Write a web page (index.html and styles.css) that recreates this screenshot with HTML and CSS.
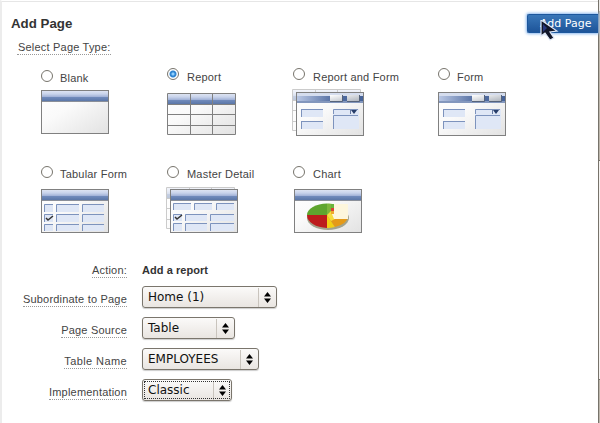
FILE: index.html
```html
<!DOCTYPE html>
<html lang="en">
<head>
<meta charset="utf-8">
<title>Add Page</title>
<link rel="stylesheet" href="styles.css">
</head>
<body>
<svg class="defs" width="0" height="0" aria-hidden="true">
  <defs>
    <linearGradient id="bar" x1="0" y1="0" x2="0" y2="1"><stop offset="0" stop-color="#dde3f2"/><stop offset=".3" stop-color="#c8d3eb"/><stop offset=".55" stop-color="#a5b5d9"/><stop offset=".65" stop-color="#6f89ba"/><stop offset="1" stop-color="#5b77a8"/></linearGradient>
    <linearGradient id="paper" x1="0" y1="0" x2="1" y2="1"><stop offset="0" stop-color="#fff"/><stop offset=".4" stop-color="#fafafa"/><stop offset="1" stop-color="#e2e2e2"/></linearGradient>
    <linearGradient id="formbar" x1="0" y1="0" x2="1" y2="0"><stop offset="0" stop-color="#b9c7e4"/><stop offset=".55" stop-color="#526da1"/><stop offset="1" stop-color="#466398"/></linearGradient>
    <linearGradient id="btn" x1="0" y1="0" x2="1" y2="1"><stop offset="0" stop-color="#fff"/><stop offset="1" stop-color="#aeb4bd"/></linearGradient>
    <symbol id="window" viewBox="0 0 68 44" width="68" height="44">
      <rect x=".5" y=".5" width="67" height="43" fill="url(#paper)" stroke="#808080"/>
      <rect x="1" y="1" width="66" height="10" fill="url(#bar)"/>
      <path d="M1 11.5h66" stroke="#8a8f99"/>
    </symbol>
    <symbol id="table" viewBox="0 0 70 42" width="70" height="42">
      <rect x=".5" y=".5" width="68" height="41" fill="url(#paper)"/>
      <rect x="1" y="1" width="67" height="10" fill="url(#bar)"/>
      <path d="M.5.5h68v41H.5zM.5 11.5h68M.5 21.5h68M.5 32.5h68M23.500 .5v41M45.500 .5v41" fill="none" stroke="#808080"/>
    </symbol>
    <symbol id="field" viewBox="0 0 22 8" width="22" height="8" preserveAspectRatio="none">
      <rect width="22" height="8" fill="#dfe7f6"/><path d="M0 .5h22M.5 0v8" stroke="#7d93bd" fill="none"/>
    </symbol>
    <symbol id="form" viewBox="0 0 68 44" width="68" height="44">
      <rect x=".5" y=".5" width="67" height="43" fill="url(#paper)" stroke="#808080"/>
      <rect x="1" y="1" width="66" height="3" fill="#d5ddee"/>
      <rect x="1" y="4" width="66" height="5" fill="url(#formbar)"/>
      <rect x="1" y="9" width="66" height="2" fill="#8397bd"/>
      <path d="M34 3h12v6H34zM51 3h12v6H51z" fill="url(#btn)"/>
      <path d="M34 9.500h12.500V3M51 9.500h12.500V3" stroke="#56637a" fill="none"/>
      <use href="#field" x="5" y="17"/><use href="#field" x="5" y="29"/>
      <path d="M37 17h26v20H37z" fill="#dfe7f6"/>
      <path d="M37.500 22v-4.500H62M37.500 37V23.500H62" fill="none" stroke="#7d93bd"/>
      <path d="M54.500 18v4" stroke="#6478a0"/><path d="M55 18h6l-3 4z" fill="#263d6a"/>
    </symbol>
    <symbol id="fields" viewBox="0 0 68 44" width="68" height="44">
      <path d="M3 15h9v8H3zM15 15h23v8H15zM41 15h22v8H41zM3 25h9v8H3zM15 25h23v8H15zM41 25h22v8H41zM3 35h9v7H3zM15 35h23v7H15zM41 35h22v7H41z" fill="#dfe7f6"/>
      <path d="M3.500 23v-7.500H12M15.500 23v-7.500H38M41.500 23v-7.500H63M3.500 33v-7.500H12M15.500 33v-7.500H38M41.500 33v-7.500H63M3.500 42v-6.500H12M15.500 42v-6.500H38M41.500 42v-6.500H63" fill="none" stroke="#7d93bd"/>
      <path d="M5 29l2 2 5-4" fill="none" stroke="#333" stroke-width="1.500"/>
    </symbol>
  </defs>
</svg>
<div class="page">
  <main>
    <header>
      <h1>Add Page</h1>
      <button class="add">Add Page
        <svg class="cursor" width="20" height="22" viewBox="0 0 20 22"><path d="M1 0v16l4-3 5 7 4-2-4-6 7-1z" fill="#111629" stroke="#dfe8f8" stroke-width="1.200"/><path d="M3 4v8l4-4z" fill="#28377e"/></svg>
      </button>
    </header>
    <div class="type-title"><span class="hint">Select Page Type:</span></div>
    <section class="types">
      <label class="type"><span class="pick"><i class="radio"></i>Blank</span>
        <svg width="72" height="52"><use href="#window" y="4"/></svg></label>
      <label class="type"><span class="pick up low wide0"><i class="radio on"></i>Report</span>
        <svg width="72" height="52"><use href="#table" y="7"/></svg></label>
      <label class="type"><span class="pick up low wide"><i class="radio"></i>Report and Form</span>
        <svg width="72" height="52"><use href="#table" y="3" opacity=".4"/><use href="#form" x="4" y="6"/></svg></label>
      <label class="type"><span class="pick up low"><i class="radio"></i>Form</span>
        <svg width="72" height="52"><use href="#form" y="6"/></svg></label>
      <label class="type"><span class="pick up"><i class="radio"></i>Tabular Form</span>
        <svg width="72" height="52"><use href="#window" y="5"/><use href="#fields" y="5"/></svg></label>
      <label class="type"><span class="pick up wide0"><i class="radio"></i>Master Detail</span>
        <svg width="72" height="52"><use href="#table" x="-1" y="3" opacity=".4"/><use href="#window" x="3" y="5"/>
          <path d="M6 19h18v7H6zM27 19h18v7H27zM49 19h18v7H49zM6 30h9v7H6zM18 30h22v7H18zM43 30h24v7H43zM6 39h9v8H6zM18 39h22v8H18zM43 39h24v8H43z" fill="#dfe7f6"/>
          <path d="M6.500 26v-6.500H24M27.500 26v-6.500H45M49.500 26v-6.500H67M6.500 37v-6.500H15M18.500 37v-6.500H40M43.500 37v-6.500H67M6.500 47v-7.500H15M18.500 47v-7.500H40M43.500 47v-7.500H67" fill="none" stroke="#7d93bd"/>
          <path d="M8 33l2 2 5-4" fill="none" stroke="#333" stroke-width="1.500"/></svg></label>
      <label class="type"><span class="pick up wide"><i class="radio"></i>Chart</span>
        <svg width="72" height="52"><use href="#window" x="2" y="5"/>
          <ellipse cx="36" cy="34" rx="21" ry="12" fill="#a3a38c"/>
          <path d="M35 31H15a20.500 11.500 0 0 1 20-11.500z" fill="#5fa52e"/>
          <path d="M35 31H15a20.500 13 0 0 0 20 13z" fill="#bd1c1c"/>
          <path d="M35 31v13a21 12 0 0 0 8-1z" fill="#f3cf13"/>
          <path d="M35 31l8 12a20 12 0 0 0 13-10l-14-2z" fill="#e59a18"/>
          <path d="M35 19.500c3 0 5 .3 7 .8V31h-7z" fill="#7db63c"/>
          <path d="M35 31l4-4h3l1 8-4 2z" fill="#f6dc3c"/>
          <path d="M40 20h16v15H42l-2-5z" fill="#fdf6dc"/>
          <path d="M39 20h3v4h-3z" fill="#68b43b"/><path d="M39 24h3v3h-3z" fill="#dc4034"/><path d="M39 27h3v3h-3z" fill="#eea92b"/></svg></label>
    </section>
    <section class="settings">
      <div class="row action"><div class="name"><span class="hint">Action:</span></div><b>Add a report</b></div>
      <div class="row"><div class="name"><span class="hint">Subordinate to Page</span></div>
        <div class="select w-page"><span>Home (1)</span><svg width="7" height="11"><path d="M0 4.500l3.500-4.500L7 4.500zM0 6.500h7L3.500 11z"/></svg></div></div>
      <div class="row"><div class="name"><span class="hint">Page Source</span></div>
        <div class="select w-source"><span>Table</span><svg width="7" height="11"><path d="M0 4.500l3.500-4.500L7 4.500zM0 6.500h7L3.500 11z"/></svg></div></div>
      <div class="row"><div class="name"><span class="hint roomy">Table Name</span></div>
        <div class="select w-table"><span>EMPLOYEES</span><svg width="7" height="11"><path d="M0 4.500l3.500-4.500L7 4.500zM0 6.500h7L3.500 11z"/></svg></div></div>
      <div class="row"><div class="name"><span class="hint">Implementation</span></div>
        <div class="select w-impl focus"><span>Classic</span><svg width="7" height="11"><path d="M0 4.500l3.500-4.500L7 4.500zM0 6.500h7L3.500 11z"/></svg></div></div>
    </section>
  </main>
  <div class="scrollbar"><div class="thumb"></div></div>
</div>
</body>
</html>
```
FILE: styles.css
```css
* { box-sizing: border-box; }
body { margin: 0; background: #fff; color: #444; font: 11px/14px "Liberation Sans", Arial, sans-serif; letter-spacing: .2px; }
.defs { display: block; }
.page { display: flex; width: 600px; height: 423px; overflow: hidden; }
main { width: 598px; border-left: 2px solid #ececec; border-top: 1px solid #fff; }
header { display: flex; justify-content: space-between; height: 39px; padding: 12px 0 0 9px; border-top: 1px solid #e6e6e6; }
h1 { margin: 0; padding-top: 1px; font-size: 13.3px; line-height: 18px; letter-spacing: 0; color: #333; }
.add { position: relative; width: 71px; height: 19px; padding: 0 0 0 12px; border: 1px solid #1c579d; border-right: 0; border-radius: 2px 0 0 2px; background: linear-gradient(#3977b9, #1d5499); box-shadow: 0 0 3px 1px #8cb9ee; color: #fff; font: 11px/18px "DejaVu Sans", sans-serif; text-align: left; white-space: nowrap; }
.cursor { position: absolute; left: 12px; top: 5px; }
.type-title { padding-left: 15px; height: 26px; }
.hint { display: inline-block; height: 15px; border-bottom: 1px dotted #999; }
.roomy { letter-spacing: .4px; }
.type-title .hint { padding: 0 1px; }
.types { display: grid; grid-template-columns: 126px 125px 146px 80px; grid-auto-rows: 98px; padding-left: 39px; }
.type svg { display: block; overflow: visible; }
.pick { display: flex; align-items: flex-start; gap: 7px; height: 20px; padding-top: 4px; line-height: 17px; white-space: nowrap; }
.up { padding-top: 2px; }
.low { line-height: 19px; }
.wide { gap: 8px; padding-left: 1px; }
.wide0 { gap: 8px; }
.radio { flex: none; width: 12px; height: 12px; border: 1px solid #77746c; border-radius: 50%; background: #fff; }
.radio.on { background: radial-gradient(circle, #8fd0ff 0 1px, #3186d2 2px 3px, #fff 4px); }
.settings { padding: 1px 0 0 18px; }
.row { display: grid; grid-template-columns: 107px 1fr; column-gap: 15px; height: 31px; align-items: start; }
.action { height: 23px; }
.name { text-align: right; padding-top: 6px; }
.action .name { padding-top: 0; }
.row b { font-size: 11px; letter-spacing: .05px; color: #333; }
.select { position: relative; display: flex; align-items: center; justify-content: space-between; height: 22px; padding: 0 5px; border: 1px solid #7a756c; border-radius: 3px; background: linear-gradient(#fbfaf9, #e9e5e1); box-shadow: 0 1px 1px #ccc; color: #111; font: 12px/19px "DejaVu Sans", sans-serif; letter-spacing: 0; }
.select span { flex: 1; margin-right: 5px; border-right: 1px solid #c9c4bd; }
.w-page { width: 135px; }
.w-source { width: 93px; }
.w-table { width: 117px; }
.w-impl { width: 90px; }
.focus::after { content: ""; position: absolute; inset: 1px; border: 1px dotted #333; }
.scrollbar { width: 2px; padding-top: 160px; background: linear-gradient(#eceae7 11px, #bdb7ac 11px); border-left: 1px solid #77736b; }
.thumb { height: 220px; background: #f4f2ef; border: solid #77736b; border-width: 1px 0; }
```
